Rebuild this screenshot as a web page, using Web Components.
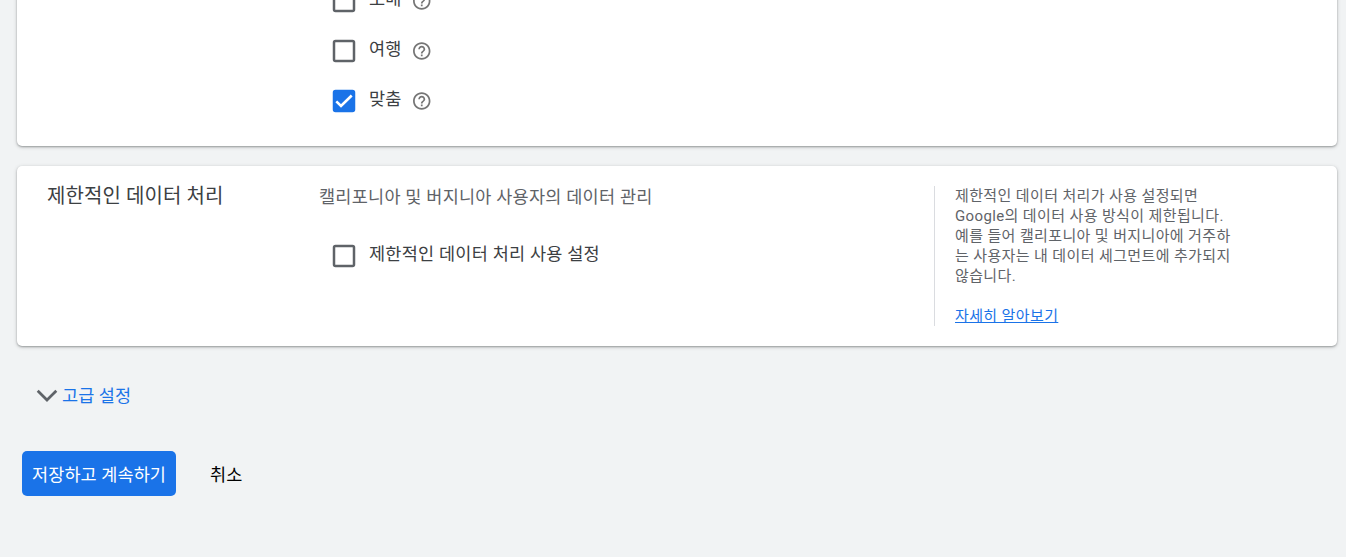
<!DOCTYPE html>
<html lang="ko">
<head>
<meta charset="utf-8">
<title>설정</title>
<style>
  html, body {
    margin: 0;
    height: 557px;
    overflow: hidden;
    background: #f1f3f4;
    font-family: Roboto, "Noto Sans CJK KR", sans-serif;
  }
</style>
</head>
<body>
<settings-page></settings-page>

<script>
class HelpIcon extends HTMLElement {
  constructor() {
    super();
    this.attachShadow({ mode: 'open' });
    this.shadowRoot.innerHTML = `
      <style>
        :host { display: block; width: 22px; height: 22px; }
        svg { display: block; fill: #757575; }
      </style>
      <svg width="22" height="22" viewBox="-.3 -.6 25.200 25.200"><path d="M11 18h2v-2h-2v2zm1-16C6.480 2 2 6.480 2 12s4.480 10 10 10 10-4.480 10-10S17.520 2 12 2zm0 18c-4.410 0-8-3.590-8-8s3.590-8 8-8 8 3.590 8 8-3.590 8-8 8zm0-14c-2.210 0-4 1.790-4 4h2c0-1.100.9-2 2-2s2 .9 2 2c0 2-3 1.750-3 5h2c0-2.250 3-2.500 3-5 0-2.210-1.790-4-4-4z"/></svg>
    `;
  }
}

class CheckRow extends HTMLElement {
  constructor() {
    super();
    this.attachShadow({ mode: 'open' });
    this.shadowRoot.innerHTML = `
      <style>
        :host {
          display: flex;
          align-items: center;
          height: 50px;
          color: #3c4043;
          font-size: 17.5px;
          letter-spacing: 0.25px;
        }
        .box { display: block; margin-right: 13px; flex: none; }
        .mark { display: none; }
        :host([checked]) .mark { display: block; }
        :host([checked]) .frame { fill: #1a73e8; stroke: #1a73e8; }
        .label { line-height: 26px; padding-bottom: 4px; white-space: nowrap; }
        ::slotted(help-icon) { margin-left: 9px; }
      </style>
      <svg class="box" width="24" height="24" viewBox="0 0 24 24" fill="none">
        <rect class="frame" x="2" y="2" width="20" height="20" rx="1.500" stroke="#5f6368" stroke-width="2.500"/>
        <path class="mark" d="M4.300 12.400l4.700 4.600L19.700 6.500" stroke="#fff" stroke-width="2.600"/>
      </svg>
      <span class="label"><slot></slot></span>
      <slot name="help"></slot>
    `;
  }
}

class SettingsCard extends HTMLElement {
  constructor() {
    super();
    this.attachShadow({ mode: 'open' });
    this.shadowRoot.innerHTML = `
      <style>
        :host {
          display: grid;
          grid-template-columns: 272px 615px 1fr;
          box-sizing: border-box;
          padding: 20px 20px 20px 30px;
          border-radius: 5px;
          background: #fff;
          box-shadow: 0 1px 2px rgba(60, 64, 67, 0.4), 0 1px 4px rgba(60, 64, 67, 0.2);
        }
        .title { color: #3c4043; font-size: 20px; line-height: 20px; letter-spacing: 0.1px; }
      </style>
      <div class="title"><slot name="title"></slot></div>
      <div><slot></slot></div>
      <slot name="side"></slot>
    `;
  }
}

class SideNote extends HTMLElement {
  constructor() {
    super();
    this.attachShadow({ mode: 'open' });
    this.shadowRoot.innerHTML = `
      <style>
        :host {
          display: block;
          padding-left: 20px;
          border-left: 1px solid #dadce0;
          color: #5f6368;
          font-size: 15px;
          line-height: 20px;
          letter-spacing: 0.375px;
          white-space: nowrap;
        }
        .link { margin-top: 20px; }
      </style>
      <slot></slot>
      <div class="link"><slot name="link"></slot></div>
    `;
  }
}

class AdvancedToggle extends HTMLElement {
  constructor() {
    super();
    this.attachShadow({ mode: 'open' });
    this.shadowRoot.innerHTML = `
      <style>
        :host {
          display: flex;
          align-items: center;
          gap: 4px;
          height: 26px;
          color: #1a73e8;
          font-size: 17.5px;
          line-height: 26px;
          letter-spacing: 0.1px;
        }
        svg { display: block; margin-top: 2px; }
        span { padding-top: 2px; }
      </style>
      <svg width="22" height="14" viewBox="0 0 22 14" fill="none" stroke="#5f6368" stroke-width="2.700"><path d="M1.700 1.700L11 11l9.300-9.300"/></svg>
      <span><slot></slot></span>
    `;
  }
}

class ActionButton extends HTMLElement {
  constructor() {
    super();
    this.attachShadow({ mode: 'open' });
    this.shadowRoot.innerHTML = `
      <style>
        :host { display: block; }
        button {
          display: block;
          height: 45px;
          padding: 3px 10px 0;
          border: 0;
          border-radius: 5px;
          background: none;
          color: #000;
          font: inherit;
          font-size: 17.5px;
          letter-spacing: 0.1px;
          line-height: 42px;
          white-space: nowrap;
        }
        :host([primary]) button { width: 154px; background: #1a73e8; color: #fff; }
      </style>
      <button type="button"><slot></slot></button>
    `;
  }
}

class SettingsPage extends HTMLElement {
  constructor() {
    super();
    this.attachShadow({ mode: 'open' });
    this.shadowRoot.innerHTML = `
      <style>
        :host { display: block; height: 557px; overflow: hidden; }
        main { display: flex; flex-direction: column; padding: 0 9px 0 17px; }
        /* The first card starts above the fold, so its top row is cut off */
        .types { height: 176px; margin-top: -30px; padding-top: 6px; }
        .data { height: 180px; margin-top: 20px; }
        .types check-row, .data check-row { margin-left: 13px; }
        .desc {
          padding-top: 1px;
          margin-bottom: 23px;
          color: #5f6368;
          font-size: 17.5px;
          line-height: 21px;
          letter-spacing: 0.25px;
        }
        a { color: #1a73e8; text-decoration: underline; }
        advanced-toggle { margin: 36px 0 0 19px; }
        .actions { display: flex; gap: 24px; margin: 43px 0 0 5px; }
      </style>
      <main>
        <settings-card class="types">
          <check-row>소매<help-icon slot="help"></help-icon></check-row>
          <check-row>여행<help-icon slot="help"></help-icon></check-row>
          <check-row checked>맞춤<help-icon slot="help"></help-icon></check-row>
        </settings-card>

        <settings-card class="data">
          <span slot="title">제한적인 데이터 처리</span>
          <div class="desc">캘리포니아 및 버지니아 사용자의 데이터 관리</div>
          <check-row>제한적인 데이터 처리 사용 설정</check-row>
          <side-note slot="side">
            제한적인 데이터 처리가 사용 설정되면<br>
            Google의 데이터 사용 방식이 제한됩니다.<br>
            예를 들어 캘리포니아 및 버지니아에 거주하<br>
            는 사용자는 내 데이터 세그먼트에 추가되지<br>
            않습니다.
            <a slot="link">자세히 알아보기</a>
          </side-note>
        </settings-card>

        <advanced-toggle>고급 설정</advanced-toggle>

        <div class="actions">
          <action-button primary>저장하고 계속하기</action-button>
          <action-button>취소</action-button>
        </div>
      </main>
    `;
  }
}

customElements.define('help-icon', HelpIcon);
customElements.define('check-row', CheckRow);
customElements.define('settings-card', SettingsCard);
customElements.define('side-note', SideNote);
customElements.define('advanced-toggle', AdvancedToggle);
customElements.define('action-button', ActionButton);
customElements.define('settings-page', SettingsPage);
</script>
</body>
</html>
